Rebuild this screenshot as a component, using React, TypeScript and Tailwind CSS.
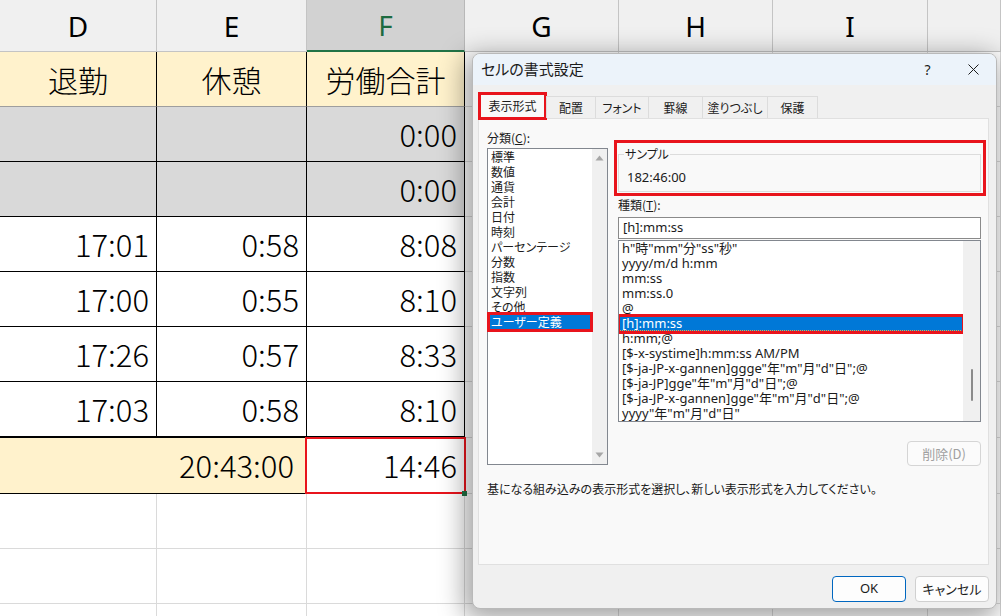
import React from 'react'

const COLW = ['w-[157px]', 'w-[150px]', 'w-[158px]', 'w-[154px]', 'w-[154px]', 'w-[155px]', 'w-[73px]']
const LETTERS = ['D', 'E', 'F', 'G', 'H', 'I', '']

const DATA = [
  { gray: true, v: ['', '', '0:00'] },
  { gray: true, v: ['', '', '0:00'] },
  { gray: false, v: ['17:01', '0:58', '8:08'] },
  { gray: false, v: ['17:00', '0:55', '8:10'] },
  { gray: false, v: ['17:26', '0:57', '8:33'] },
  { gray: false, v: ['17:03', '0:58', '8:10'] },
]

const CATEGORIES = ['標準', '数値', '通貨', '会計', '日付', '時刻', 'パーセンテージ', '分数', '指数', '文字列', 'その他', 'ユーザー定義']

const FORMATS = [
  'h"時"mm"分"ss"秒"',
  'yyyy/m/d h:mm',
  'mm:ss',
  'mm:ss.0',
  '@',
  '[h]:mm:ss',
  'h:mm;@',
  '[$-x-systime]h:mm:ss AM/PM',
  '[$-ja-JP-x-gannen]ggge"年"m"月"d"日";@',
  '[$-ja-JP]gge"年"m"月"d"日";@',
  '[$-ja-JP-x-gannen]gge"年"m"月"d"日";@',
  'yyyy"年"m"月"d"日"',
]

const TABS = [
  { label: '配置', w: 'w-[50px]' },
  { label: 'フォント', w: 'w-[54px]' },
  { label: '罫線', w: 'w-[55px]' },
  { label: '塗りつぶし', w: 'w-[66px]' },
  { label: '保護', w: 'w-[51px]' },
]

function Cell({ i, className = '', children }: { i: number; className?: string; children?: React.ReactNode }) {
  return (
    <div className={`${COLW[i]} shrink-0 h-full flex items-center border-r border-b ${className}`}>
      {children}
    </div>
  )
}

function GridTail({ from }: { from: number }) {
  return (
    <>
      {COLW.slice(from).map((_, k) => (
        <Cell key={k} i={from + k} className="border-[#dadada] bg-white" />
      ))}
    </>
  )
}

function Sheet() {
  return (
    <div className="flex flex-col font-['Noto_Sans_CJK_JP',sans-serif] font-light text-[31px] text-black">
      {/* column headers */}
      <div className="flex h-[52px] font-['Noto_Sans',sans-serif] font-normal text-[28px]">
        {LETTERS.map((l, i) =>
          i === 2 ? (
            <div key={i} className={`${COLW[i]} shrink-0 flex items-center justify-center bg-[#d2d2d2] border-r border-[#b8b8b8] border-b-2 border-b-[#217346] text-[#1d6b40]`}>
              {l}
            </div>
          ) : (
            <div key={i} className={`${COLW[i]} shrink-0 flex items-center justify-center bg-[#f0f0f0] border-r border-b border-[#c4c4c4]`}>
              {l}
            </div>
          )
        )}
      </div>

      {/* title row */}
      <div className="flex h-[55px] text-[30px]">
        {['退勤', '休憩', '労働合計'].map((t, i) => (
          <Cell key={i} i={i} className="justify-center bg-[#fff2cc] border-r-black border-b-[#9e9e9e]">
            {t}
          </Cell>
        ))}
        <GridTail from={3} />
      </div>

      {DATA.map((r, ri) => (
        <div key={ri} className={ri === DATA.length - 1 ? 'flex h-[56px]' : 'flex h-[55px]'}>
          {r.v.map((v, i) => (
            <Cell
              key={i}
              i={i}
              className={`justify-end pr-[7px] border-black ${r.gray ? 'bg-[#d9d9d9]' : 'bg-white'} ${ri === DATA.length - 1 ? 'border-b-2' : ''}`}
            >
              {v}
            </Cell>
          ))}
          <GridTail from={3} />
        </div>
      ))}

      {/* total row */}
      <div className="flex h-[56px]">
        <div className="w-[307px] shrink-0 h-full flex items-center justify-end pr-[13px] bg-[#fff2cc] border-b border-black">
          20:43:00
        </div>
        <div className={`${COLW[2]} shrink-0 h-full relative flex items-center justify-end pr-[7px] bg-white border-r border-b border-black`}>
          14:46
          <div className="absolute -left-[2px] -top-[1px] -right-[2px] -bottom-[1px] border-2 border-[#e8141c]" />
          <div className="absolute -right-[3px] -bottom-[3px] w-[5px] h-[5px] bg-[#217346]" />
        </div>
        <GridTail from={3} />
      </div>

      {[0, 1, 2].map((k) => (
        <div key={k} className="flex h-[55px]">
          <GridTail from={0} />
        </div>
      ))}
    </div>
  )
}

function Triangle({ down }: { down?: boolean }) {
  return (
    <svg width="9" height="6" viewBox="0 0 9 6" className="mx-auto">
      <path d={down ? 'M0.5 0.5 L8.5 0.5 L4.5 5.5 Z' : 'M0.5 5.5 L8.5 5.5 L4.5 0.5 Z'} fill="#a6a6a6" />
    </svg>
  )
}

function Dialog() {
  return (
    <div className="absolute left-[472px] top-[53px] w-[525px] h-[556px] rounded-[8px] border border-[#b9b9b9] bg-[#f0f0f0] overflow-hidden shadow-[-4px_6px_26px_4px_rgba(0,0,0,0.36)] font-['Noto_Sans_CJK_JP',sans-serif] text-[12px] text-[#1b1b1b] [font-feature-settings:'palt']">
      {/* title bar */}
      <div className="h-[31px] flex items-center bg-[#ecf3fa]">
        <div className="pl-[8px] text-[15px] flex-1">セルの書式設定</div>
        <div className="w-[45px] h-full flex items-center justify-center text-[14px] font-['Noto_Sans',sans-serif]">?</div>
        <div className="w-[46px] h-full flex items-center justify-center">
          <svg width="11" height="11" viewBox="0 0 11 11">
            <path d="M0.5 0.5 L10.5 10.5 M10.5 0.5 L0.5 10.5" stroke="#1b1b1b" strokeWidth="1" />
          </svg>
        </div>
      </div>

      <div className="px-[5px]">
        {/* tabs */}
        <div className="mt-[7px] h-[26px] flex items-end relative z-10">
          <div className="w-[69px] h-[28px] -mb-[2px] flex items-center justify-center bg-[#f9f9f9] border-[3px] border-[#e8141c]">
            表示形式
          </div>
          {TABS.map((t) => (
            <div key={t.label} className={`${t.w} h-[22px] flex items-center justify-center bg-[#f0f0f0] border border-b-0 border-[#dcdcdc] -ml-px first:ml-0`}>
              {t.label}
            </div>
          ))}
        </div>

        {/* panel */}
        <div className="w-[511px] h-[447px] border border-[#e0e0e0] bg-[#f9f9f9] pl-[8px] pt-[11px]">
          <div className="flex gap-[10px]">
            {/* categories */}
            <div className="w-[121px] shrink-0">
              <div className="h-[16px] leading-[16px]">
                分類(<span className="underline">C</span>):
              </div>
              <div className="mt-[2px] h-[317px] border border-[#82878f] bg-white flex">
                <div className="flex-1 leading-[15px]">
                  {CATEGORIES.map((c) =>
                    c === 'ユーザー定義' ? (
                      <div key={c} className="relative h-[15px] pl-[3px] bg-[#0078d7] text-white">
                        {c}
                        <div className="absolute -left-[1px] -right-[1px] -top-[2px] -bottom-[3px] border-[3px] border-[#e8141c]" />
                      </div>
                    ) : (
                      <div key={c} className="h-[15px] pl-[3px]">
                        {c}
                      </div>
                    )
                  )}
                </div>
                <div className="w-[15px] bg-[#f0f0f0] flex flex-col justify-between py-[6px]">
                  <Triangle />
                  <Triangle down />
                </div>
              </div>
            </div>

            {/* right side */}
            <div className="w-[363px] shrink-0 flex flex-col">
              <div className="relative mt-[24px] h-[38px] border border-[#dcdcdc]">
                <div className="absolute left-[5px] -top-[8px] px-[1px] leading-[14px] bg-[#f9f9f9]">サンプル</div>
                <div className="pl-[8px] pt-[14px] leading-[16px] text-[13px] font-['Noto_Sans','Noto_Sans_CJK_JP',sans-serif]">182:46:00</div>
                <div className="absolute -left-[5px] -right-[6px] -top-[15px] -bottom-[5px] border-[3px] border-[#e8141c]" />
              </div>

              <div className="mt-[5px] h-[16px] leading-[16px]">
                種類(<span className="underline">T</span>):
              </div>
              <div className="mt-[4px] h-[22px] border border-[#8a8a8a] bg-white pl-[4px] flex items-center text-[13px] font-['Noto_Sans','Noto_Sans_CJK_JP',sans-serif] [font-feature-settings:normal]">
                [h]:mm:ss
              </div>

              <div className="mt-[1px] h-[182px] border border-[#82878f] bg-white flex overflow-hidden text-[13px] leading-[15px] font-['Noto_Sans','Noto_Sans_CJK_JP',sans-serif] [font-feature-settings:normal]">
                <div className="flex-1 min-w-0">
                  {FORMATS.map((f) =>
                    f === '[h]:mm:ss' ? (
                      <div key={f} className="relative h-[15px] pl-[3px] bg-[#0078d7] text-white whitespace-nowrap">
                        {f}
                        <div className="absolute left-0 right-0 bottom-0 border-b border-dotted border-[#f0a040]" />
                        <div className="absolute -left-[2px] -right-[2px] -top-[2px] -bottom-[3px] border-[3px] border-[#e8141c]" />
                      </div>
                    ) : (
                      <div key={f} className="h-[15px] pl-[3px] whitespace-nowrap">
                        {f}
                      </div>
                    )
                  )}
                </div>
                <div className="w-[17px] shrink-0 bg-[#f0f0f0] relative">
                  <div className="absolute left-[8px] top-[128px] w-[2px] h-[32px] rounded-full bg-[#8b8b8b]" />
                </div>
              </div>

              <div className="mt-[19px] self-end w-[74px] h-[25px] border border-[#d5d5d5] rounded-[4px] bg-[#fbfbfb] text-[#a0a0a0] flex items-center justify-center text-[13px]">
                削除(D)
              </div>
            </div>
          </div>

          <div className="mt-[15px] leading-[16px]">
            基になる組み込みの表示形式を選択し、新しい表示形式を入力してください。
          </div>
        </div>

        {/* buttons */}
        <div className="w-[511px] mt-[11px] flex justify-end gap-[9px] text-[13px]">
          <div className="w-[74px] h-[26px] border border-[#0067c0] rounded-[4px] bg-[#fdfdfd] flex items-center justify-center font-['Noto_Sans',sans-serif]">
            OK
          </div>
          <div className="w-[74px] h-[26px] border border-[#d0d0d0] rounded-[4px] bg-[#fdfdfd] flex items-center justify-center">
            キャンセル
          </div>
        </div>
      </div>
    </div>
  )
}

export default function App() {
  return (
    <div className="relative w-[1001px] h-[616px] overflow-hidden bg-white">
      <Sheet />
      <Dialog />
    </div>
  )
}
